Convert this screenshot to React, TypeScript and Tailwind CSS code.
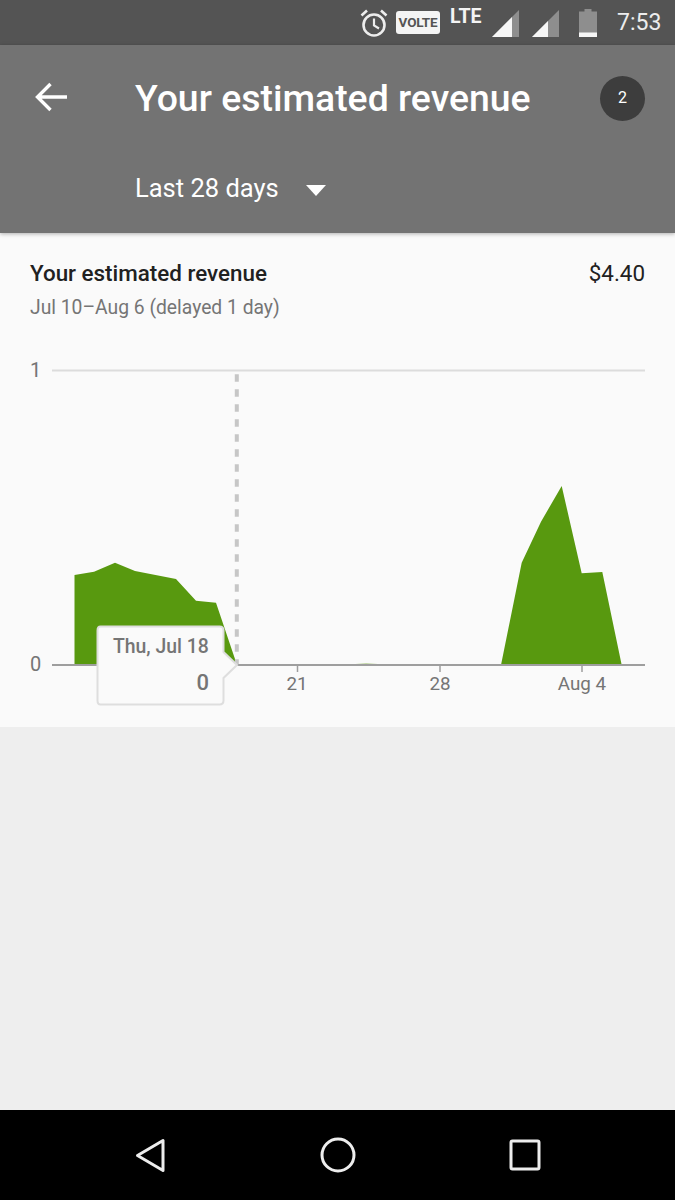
const StatusBar = () => (
  <div className="h-[45px] bg-[#545454] flex items-start text-[#ededed] pl-[360px] shrink-0">
    <svg width="28" height="30" viewBox="0 0 28 30" className="mt-[8px]">
      <circle cx="14" cy="17" r="10.5" fill="none" stroke="#ededed" strokeWidth="2.6" />
      <path d="M14 10.5V17.5L19 20.5" fill="none" stroke="#ededed" strokeWidth="2.2" />
      <path d="M1.5 7.5L7 2.5M26.5 7.5L21 2.5" stroke="#ededed" strokeWidth="2.6" />
    </svg>
    <div className="ml-[8px] mt-[11px] w-[44px] h-[23px] rounded-[3px] bg-[#f4f4f4] text-[#545454] text-[13.5px] leading-[23px] font-bold text-center tracking-[-0.2px]">
      VOLTE
    </div>
    <div className="ml-[10px] mt-[6px] w-[33px] text-[19.5px] leading-[21px] font-bold text-[#f4f4f4]">LTE</div>
    <svg width="27" height="27" viewBox="0 0 27 27" className="ml-[9px] mt-[10px]">
      <path d="M27 0V27H0Z" fill="#8e8e8e" />
      <path d="M20 7V27H0Z" fill="#f6f6f6" />
    </svg>
    <svg width="27" height="27" viewBox="0 0 27 27" className="ml-[13px] mt-[10px]">
      <path d="M27 0V27H0Z" fill="#8e8e8e" />
      <path d="M16 11V27H0Z" fill="#f6f6f6" />
    </svg>
    <svg width="18" height="28" viewBox="0 0 18 28" className="ml-[20px] mt-[9px]">
      <path d="M5.5 0H12.5V2.5H18V28H0V2.5H5.5Z" fill="#8e8e8e" />
      <rect y="23.5" width="18" height="4.5" fill="#f6f6f6" />
    </svg>
    <div className="ml-[20px] mt-[9px] text-[23px] leading-[28px]">7:53</div>
  </div>
);

const Header = () => (
  <div className="h-[188px] bg-[#737373] text-white shrink-0 relative z-10 shadow-[0_1px_4px_rgba(0,0,0,0.3)]">
    <div className="flex items-center pl-[34px] pr-[30px] pt-[29px]">
      <svg width="34" height="30" viewBox="0 0 34 30" fill="none" stroke="#fff" strokeWidth="3.4" className="-translate-y-[1px]">
        <path d="M33 15H4M16.5 2L3.5 15L16.5 28" />
      </svg>
      <div className="ml-[67px] text-[37.4px] leading-[48px] font-medium flex-1">Your estimated revenue</div>
      <div className="w-[45px] h-[45px] rounded-full bg-[#3d3d3d] flex items-center justify-center text-[16px]">2</div>
    </div>
    <div className="flex items-center pl-[135px] mt-[48px]">
      <div className="text-[25.5px] leading-[36px]">Last 28 days</div>
      <svg width="20" height="11" viewBox="0 0 20 11" className="ml-[27px] mt-[5px]">
        <path d="M0 0H20L10 11Z" fill="#fff" />
      </svg>
    </div>
  </div>
);

// chart coords are page coords minus 340
const Chart = () => (
  <div className="relative h-[387px]">
    <svg width="675" height="387" viewBox="0 0 675 387" className="block">
      <path d="M52 30.5H645" stroke="#dcdcdc" strokeWidth="2" />
      <text x="30" y="37" fontSize="20" fill="#757575">1</text>
      <text x="30" y="331" fontSize="20" fill="#757575">0</text>
      <path d="M74.5 325V235L94 231.7L115 222.7L135 231L176 239L196 260.7L216 262.7L237 325Z" fill="#58990f" />
      <path d="M501 325L521.7 222.7L541 181.7L561.7 146L581.7 233.3L602.3 232L621.7 325Z" fill="#58990f" />
      <path d="M345 325Q365 322 390 325Z" fill="#8fb85a" />
      <path d="M236.8 34.3V324" stroke="#c6c6c6" strokeWidth="4" strokeDasharray="7.5 7.5" />
      <path d="M52 325H645" stroke="#9e9e9e" strokeWidth="2" />
      <path d="M297.5 326V332M440 326V332M582 326V332" stroke="#9e9e9e" strokeWidth="1.5" />
      <text x="297" y="350" fontSize="18.8" fill="#757575" textAnchor="middle">21</text>
      <text x="440" y="350" fontSize="18.8" fill="#757575" textAnchor="middle">28</text>
      <text x="582" y="350" fontSize="18.8" fill="#757575" textAnchor="middle">Aug 4</text>
    </svg>
    <div className="absolute left-[96px] top-[285px] w-[144px] h-[81px]">
      <svg width="144" height="81" viewBox="0 0 144 81" className="absolute inset-0">
        <path
          d="M4.5 1.5H123.5Q127.5 1.5 127.5 5.5V27L141 40L127.5 53V75.5Q127.5 79.5 123.5 79.5H4.5Q1.5 79.5 1.5 75.5V5.5Q1.5 1.5 4.5 1.5Z"
          fill="#fafafa"
          stroke="#dedede"
          strokeWidth="2"
        />
      </svg>
      <div className="absolute left-[17px] top-[10px] text-[19.4px] leading-[24px] font-medium text-[#757575] whitespace-nowrap">
        Thu, Jul 18
      </div>
      <div className="absolute right-[31px] top-[44px] text-[22px] leading-[28px] font-medium text-[#757575]">0</div>
    </div>
  </div>
);

const Card = () => (
  <div className="h-[494px] bg-[#fafafa] shrink-0">
    <div className="px-[30px] pt-[26px] h-[107px]">
      <div className="flex items-center justify-between">
        <div className="text-[22.4px] leading-[28px] font-medium text-[#212121]">Your estimated revenue</div>
        <div className="text-[22.4px] leading-[28px] text-[#212121]">$4.40</div>
      </div>
      <div className="text-[19.3px] leading-[26px] mt-[8px] text-[#757575]">Jul 10–Aug 6 (delayed 1 day)</div>
    </div>
    <Chart />
  </div>
);

const NavBar = () => (
  <div className="h-[90px] bg-black flex items-center shrink-0 pl-[134px]">
    <svg width="32" height="37" viewBox="0 0 32 37" fill="none" stroke="#ededed" strokeWidth="3" strokeLinejoin="round">
      <path d="M3.5 18.5L29 3.5V33.5Z" />
    </svg>
    <svg width="36" height="36" viewBox="0 0 36 36" fill="none" stroke="#ededed" strokeWidth="3" className="ml-[153.5px]">
      <circle cx="18" cy="18" r="16" />
    </svg>
    <svg width="32" height="32" viewBox="0 0 32 32" fill="none" stroke="#ededed" strokeWidth="3" strokeLinejoin="round" className="ml-[153.5px]">
      <rect x="2" y="2" width="28" height="28" rx="1.5" />
    </svg>
  </div>
);

export default function App() {
  return (
    <div className="w-[675px] h-[1200px] flex flex-col bg-[#eeeeee] overflow-hidden font-['Roboto',sans-serif]">
      <StatusBar />
      <Header />
      <Card />
      <div className="flex-1" />
      <NavBar />
    </div>
  );
}
